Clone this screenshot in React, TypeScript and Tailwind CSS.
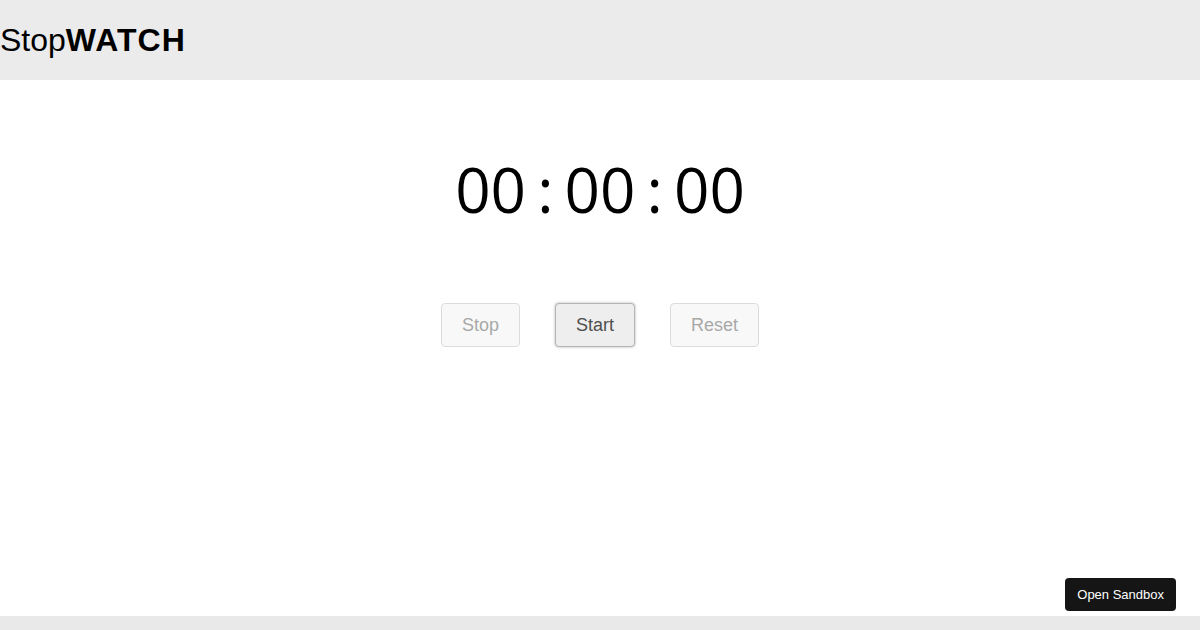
import { useEffect, useRef, useState } from "react";

// Simple stopwatch: minutes : seconds : centiseconds
function pad(n: number) {
    return String(n).padStart(2, "0");
}

export default function App() {
    const [elapsed, setElapsed] = useState(0);
    const [running, setRunning] = useState(false);
    const timerRef = useRef<number | null>(null);

    useEffect(() => {
        if (!running) return;
        const started = Date.now() - elapsed;
        timerRef.current = window.setInterval(() => {
            setElapsed(Date.now() - started);
        }, 10);
        return () => {
            if (timerRef.current) window.clearInterval(timerRef.current);
        };
        // eslint-disable-next-line react-hooks/exhaustive-deps
    }, [running]);

    const minutes = Math.floor(elapsed / 60000);
    const seconds = Math.floor((elapsed % 60000) / 1000);
    const centis = Math.floor((elapsed % 1000) / 10);

    const btnBase =
        "h-[44px] px-[20px] rounded-[4px] border text-[18px] leading-[20px] transition-colors";
    const btnOff = "border-[#dcdcdc] bg-[#f8f8f8] text-[#a8a8a8] cursor-default";
    const btnOn =
        "border-[#b5b5b5] bg-[#eeeeee] text-[#4f4f4f] shadow-[0_0_3px_rgba(0,0,0,0.3)] hover:bg-[#e6e6e6]";

    return (
        <div className="min-h-screen h-screen flex flex-col bg-white font-['Liberation_Sans',Arial,sans-serif] text-black">
            {/* Header */}
            <header className="h-[80px] shrink-0 bg-[#ebebeb] flex items-center">
                <h1 className="text-[32px] leading-none">
                    Stop<span className="font-bold tracking-[1px]">WATCH</span>
                </h1>
            </header>

            {/* Timer */}
            <main className="flex-1 flex flex-col items-center">
                <div className="mt-[78px] font-['Open_Sans',sans-serif] text-[62px] leading-[62px] [word-spacing:-5px] whitespace-pre">
                    {pad(minutes)} : {pad(seconds)} : {pad(centis)}
                </div>

                <div className="mt-[83px] flex items-center gap-[35px]">
                    <button
                        type="button"
                        disabled={!running}
                        onClick={() => setRunning(false)}
                        className={`${btnBase} ${running ? btnOn : btnOff}`}
                    >
                        Stop
                    </button>
                    <button
                        type="button"
                        disabled={running}
                        onClick={() => setRunning(true)}
                        className={`${btnBase} ${running ? btnOff : btnOn}`}
                    >
                        Start
                    </button>
                    <button
                        type="button"
                        disabled={elapsed === 0}
                        onClick={() => {
                            setRunning(false);
                            setElapsed(0);
                        }}
                        className={`${btnBase} ${elapsed === 0 ? btnOff : btnOn}`}
                    >
                        Reset
                    </button>
                </div>
            </main>

            <footer className="h-[14px] shrink-0 bg-[#e9e9e9]" />

            {/* Sandbox link */}
            <a
                href="#"
                className="fixed right-[24px] bottom-[19px] h-[33px] px-[12px] flex items-center rounded-[4px] bg-[#151515] text-white text-[13px]"
            >
                Open Sandbox
            </a>
        </div>
    );
}
